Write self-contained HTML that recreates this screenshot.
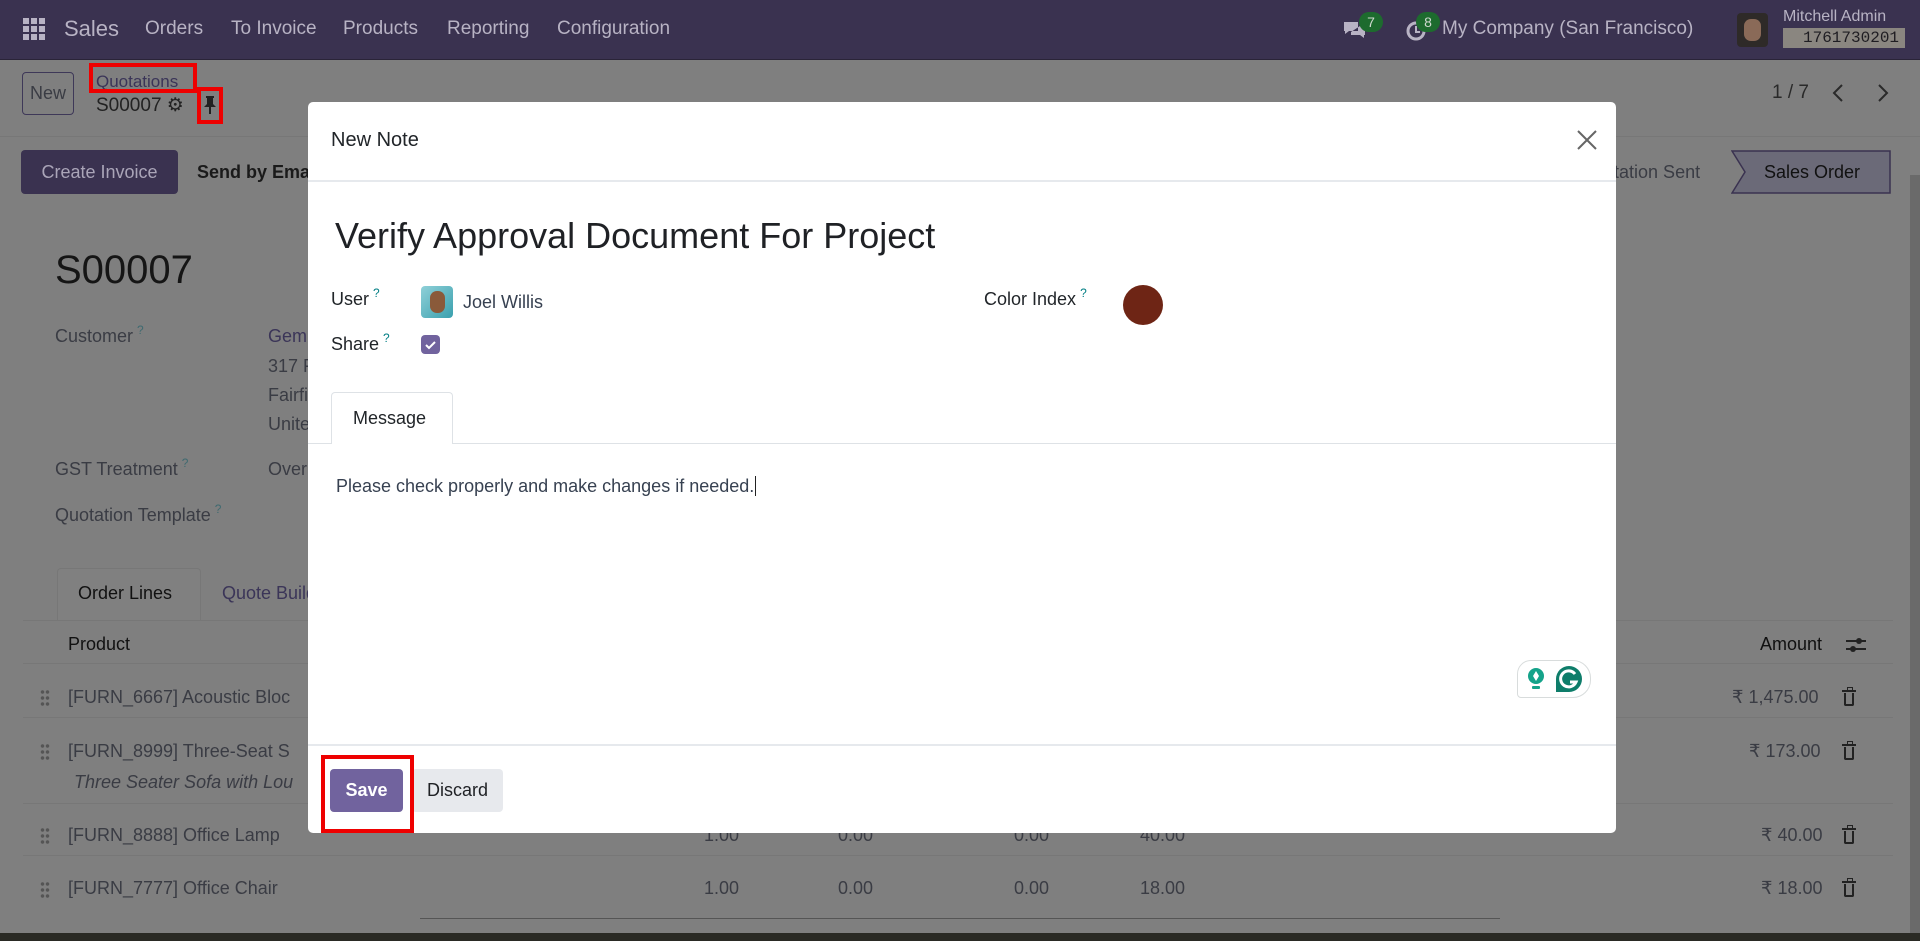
<!DOCTYPE html>
<html><head><meta charset="utf-8"><style>
*{box-sizing:border-box;margin:0;padding:0}
body{width:1920px;height:941px;overflow:hidden;font-family:"Liberation Sans",sans-serif;background:#7f7f7f;position:relative;color:#111}
.a{position:absolute;white-space:nowrap}
.nav{position:absolute;left:0;top:0;width:1920px;height:60px;background:#3a3250;border-bottom:1px solid #2a2438}
.nav .a{color:#b8b3c4;font-size:19px;top:18px}
.g{color:#3a3c44}
.hr{position:absolute;height:1px;background:#777}
.modal{position:absolute;left:308px;top:102px;width:1308px;height:731px;background:#fff;border-radius:5px}
.modal .a{color:#212529}
.q{color:#017e84;font-size:12px;position:relative;top:-8px;margin-left:4px}
.trash{position:absolute;width:10px;height:13px;border:2px solid #222;border-top:none;border-radius:0 0 2px 2px}
.trash:before{content:"";position:absolute;left:-4px;top:-3px;width:14px;height:2px;background:#222}
.trash:after{content:"";position:absolute;left:1px;top:-6px;width:4px;height:2px;border:1px solid #222;border-bottom:none}
.drag{position:absolute;width:10px;height:18px;background:radial-gradient(circle,#555 1.5px,transparent 2px) 0 0/5px 6px}
.ff{font-size:18px}
</style></head><body>
<div class="nav">
  <svg class="a" style="left:23px;top:18px" width="22" height="22"><g fill="#b8b3c4"><rect x="0" y="0" width="6" height="6"/><rect x="8" y="0" width="6" height="6"/><rect x="16" y="0" width="6" height="6"/><rect x="0" y="8" width="6" height="6"/><rect x="8" y="8" width="6" height="6"/><rect x="16" y="8" width="6" height="6"/><rect x="0" y="16" width="6" height="6"/><rect x="8" y="16" width="6" height="6"/><rect x="16" y="16" width="6" height="6"/></g></svg>
  <div class="a" style="left:64px;font-size:22px;top:16px">Sales</div>
  <div class="a" style="left:145px">Orders</div>
  <div class="a" style="left:231px">To Invoice</div>
  <div class="a" style="left:343px">Products</div>
  <div class="a" style="left:447px">Reporting</div>
  <div class="a" style="left:557px">Configuration</div>
  <svg class="a" style="left:1342px;top:18px" width="26" height="26"><path d="M2 4h14v9H7l-4 3v-3H2z M9 14v3h9l4 3v-3h1V8h-5" fill="#b8b3c4"/></svg>
  <div class="a" style="left:1359px;top:12px;width:24px;height:20px;border-radius:10px;background:#1d6b2e;color:#cfd8cf;font-size:14px;text-align:center;line-height:20px">7</div>
  <svg class="a" style="left:1405px;top:20px" width="22" height="22"><circle cx="11" cy="11" r="8" fill="none" stroke="#b8b3c4" stroke-width="3"/><path d="M11 6v6h4" stroke="#b8b3c4" stroke-width="2" fill="none"/></svg>
  <div class="a" style="left:1416px;top:12px;width:24px;height:20px;border-radius:10px;background:#1d6b2e;color:#cfd8cf;font-size:14px;text-align:center;line-height:20px">8</div>
  <div class="a" style="left:1442px">My Company (San Francisco)</div>
  <div class="a" style="left:1737px;top:13px;width:31px;height:34px;border-radius:4px;background:#2e2a28"><div style="position:absolute;left:7px;top:6px;width:17px;height:22px;border-radius:7px;background:#8a6a58"></div></div>
  <div class="a" style="left:1783px;top:8px;font-size:16px">Mitchell Admin</div>
  <div class="a" style="left:1783px;top:28px;width:122px;height:20px;background:#8a8680;color:#1f1d22;font-family:'Liberation Mono',monospace;font-size:16px;line-height:20px;padding-left:20px">1761730201</div>
</div>
<div class="a" style="left:22px;top:72px;width:52px;height:43px;border:1px solid #3e3858;border-radius:4px;color:#3a3c44;font-size:18px;text-align:center;line-height:41px">New</div>
<div class="a" style="left:96px;top:72px;font-size:17px;color:#3b3558">Quotations</div>
<div class="a" style="left:89px;top:63px;width:108px;height:30px;border:4px solid #e00"></div>
<div class="a" style="left:96px;top:94px;font-size:19px;color:#222">S00007 ⚙</div>
<div class="a" style="left:197px;top:87px;width:26px;height:37px;border:4px solid #e00"></div>
<svg class="a" style="left:203px;top:95px" width="14" height="20"><path d="M3 1h8v2h-1v6l3 3H1l3-3V3H3z M6 12h2v7H6z" fill="#222"/></svg>
<div class="a" style="left:1772px;top:82px;font-size:19px;color:#2a2a2a">1 / 7</div>
<svg class="a" style="left:1831px;top:83px" width="14" height="20"><path d="M11 2L3 10l8 8" stroke="#2a2a2a" stroke-width="2" fill="none"/></svg>
<svg class="a" style="left:1876px;top:83px" width="14" height="20"><path d="M3 2l8 8-8 8" stroke="#2a2a2a" stroke-width="2" fill="none"/></svg>
<div class="hr" style="left:0;top:136px;width:1920px"></div>
<div class="a" style="left:21px;top:150px;width:157px;height:44px;background:#3a3250;border-radius:4px;color:#aaa5b8;font-size:18px;text-align:center;line-height:44px">Create Invoice</div>
<div class="a" style="left:197px;top:162px;font-size:18px;color:#1a1a1a;font-weight:bold">Send by Email</div>
<div class="a" style="left:1580px;top:162px;font-size:18px;color:#3a3c44">Quotation Sent</div>
<svg class="a" style="left:1731px;top:150px" width="160" height="44"><path d="M1 1H159V43H1L14 22Z" fill="#6b6a78" stroke="#3a3250" stroke-width="1.5"/></svg>
<div class="a" style="left:1764px;top:162px;font-size:18px;color:#111">Sales Order</div>
<div class="a" style="left:1910px;top:175px;width:10px;height:766px;background:#6a6a6a"></div>
<div class="a" style="left:55px;top:248px;font-size:40px;color:#151515">S00007</div>
<div class="a g ff" style="left:55px;top:326px">Customer<span class="q" style="color:#3f6a70">?</span></div>
<div class="a ff" style="left:268px;top:326px;color:#3b3558">Gemini</div>
<div class="a g ff" style="left:268px;top:356px">317 F</div>
<div class="a g ff" style="left:268px;top:385px">Fairfi</div>
<div class="a g ff" style="left:268px;top:414px">Unite</div>
<div class="a g ff" style="left:55px;top:459px">GST Treatment<span class="q" style="color:#3f6a70">?</span></div>
<div class="a g ff" style="left:268px;top:459px">Over</div>
<div class="a g ff" style="left:55px;top:505px">Quotation Template<span class="q" style="color:#3f6a70">?</span></div>
<div class="a" style="left:57px;top:568px;width:144px;height:53px;border:1px solid #777;border-bottom:none;border-radius:4px 4px 0 0;background:#808080"></div>
<div class="a ff" style="left:78px;top:583px;color:#111">Order Lines</div>
<div class="a ff" style="left:222px;top:583px;color:#3b3558">Quote Builder</div>
<div class="hr" style="left:23px;top:620px;width:1870px"></div>
<div class="a ff" style="left:68px;top:634px;color:#111">Product</div>
<div class="a ff" style="left:1760px;top:634px;color:#111">Amount</div>
<svg class="a" style="left:1846px;top:636px" width="20" height="18"><path d="M0 5h20M0 13h20" stroke="#222" stroke-width="2"/><circle cx="13" cy="5" r="3" fill="#222"/><circle cx="7" cy="13" r="3" fill="#222"/></svg>
<div class="hr" style="left:23px;top:663px;width:1870px"></div>
<div class="drag" style="left:40px;top:689px"></div>
<div class="a g ff" style="left:68px;top:687px">[FURN_6667] Acoustic Bloc</div>
<div class="a g ff" style="left:1732px;top:687px">₹ 1,475.00</div><div class="trash" style="left:1844px;top:693px"></div>
<div class="hr" style="left:23px;top:717px;width:1870px"></div>
<div class="drag" style="left:40px;top:743px"></div>
<div class="a g ff" style="left:68px;top:741px">[FURN_8999] Three-Seat S</div>
<div class="a g ff" style="left:74px;top:772px;font-style:italic">Three Seater Sofa with Lou</div>
<div class="a g ff" style="left:1749px;top:741px">₹ 173.00</div><div class="trash" style="left:1844px;top:747px"></div>
<div class="hr" style="left:23px;top:803px;width:1870px"></div>
<div class="drag" style="left:40px;top:827px"></div>
<div class="a g ff" style="left:68px;top:825px">[FURN_8888] Office Lamp</div>
<div class="a g ff" style="left:704px;top:825px">1.00</div>
<div class="a g ff" style="left:838px;top:825px">0.00</div>
<div class="a g ff" style="left:1014px;top:825px">0.00</div>
<div class="a g ff" style="left:1140px;top:825px">40.00</div>
<div class="a g ff" style="left:1761px;top:825px">₹ 40.00</div><div class="trash" style="left:1844px;top:831px"></div>
<div class="hr" style="left:23px;top:855px;width:1870px"></div>
<div class="drag" style="left:40px;top:881px"></div>
<div class="a g ff" style="left:68px;top:878px">[FURN_7777] Office Chair</div>
<div class="a g ff" style="left:704px;top:878px">1.00</div>
<div class="a g ff" style="left:838px;top:878px">0.00</div>
<div class="a g ff" style="left:1014px;top:878px">0.00</div>
<div class="a g ff" style="left:1140px;top:878px">18.00</div>
<div class="a g ff" style="left:1761px;top:878px">₹ 18.00</div><div class="trash" style="left:1844px;top:884px"></div>
<div class="hr" style="left:420px;top:918px;width:1080px;background:#555"></div>
<div class="a" style="left:0;top:933px;width:1920px;height:8px;background:#2a2a24"></div>
<div class="modal">
  <div class="a" style="left:23px;top:27px;font-size:20px">New Note</div>
  <svg class="a" style="left:1269px;top:28px" width="20" height="20"><path d="M1 1L19 19M19 1L1 19" stroke="#666" stroke-width="2"/></svg>
  <div class="a" style="left:0;top:78px;width:1308px;height:2px;background:#e6e9ed"></div>
  <div class="a" style="left:27px;top:113px;font-size:36px;color:#1f2125">Verify Approval Document For Project</div>
  <div class="a" style="left:23px;top:187px;font-size:18px">User<span class="q">?</span></div>
  <div class="a" style="left:113px;top:184px;width:32px;height:32px;border-radius:4px;background:linear-gradient(135deg,#8fd0d8,#3aa0ae)"><div style="position:absolute;left:9px;top:5px;width:15px;height:22px;border-radius:7px;background:#8a5a3a"></div></div>
  <div class="a" style="left:155px;top:190px;font-size:18px;color:#374151">Joel Willis</div>
  <div class="a" style="left:676px;top:187px;font-size:18px">Color Index<span class="q">?</span></div>
  <div class="a" style="left:815px;top:183px;width:40px;height:40px;border-radius:50%;background:#6e2515"></div>
  <div class="a" style="left:23px;top:232px;font-size:18px">Share<span class="q">?</span></div>
  <div class="a" style="left:113px;top:233px;width:19px;height:19px;border-radius:4px;background:#71639e"><svg width="19" height="19"><path d="M5 10l3 3 6-6" stroke="#fff" stroke-width="2" fill="none"/></svg></div>
  <div class="a" style="left:23px;top:290px;width:122px;height:52px;border:1px solid #dee2e6;border-bottom:none;border-radius:4px 4px 0 0;background:#fff"></div>
  <div class="a" style="left:45px;top:306px;font-size:18px">Message</div>
  <div class="a" style="left:0;top:341px;width:1308px;height:1px;background:#dee2e6"></div>
  <div class="a" style="top:341px;left:24px;width:120px;height:2px;background:#fff"></div>
  <div class="a" style="left:28px;top:374px;font-size:18px;color:#374151">Please check properly and make changes if needed.<span style="border-left:1px solid #222;margin-left:1px"></span></div>
  <div class="a" style="left:1209px;top:558px;width:74px;height:38px;border:1px solid #d8dcdc;border-radius:14px 18px 18px 4px;background:#fff">
    <svg style="position:absolute;left:8px;top:6px" width="22" height="26"><circle cx="10" cy="9" r="8" fill="#15a38a"/><path d="M10 4l3 5-3 5-3-5z" fill="#fff"/><rect x="6" y="19" width="8" height="3" rx="1" fill="#15a38a"/></svg>
    <svg style="position:absolute;left:37px;top:4px" width="28" height="30"><path d="M14 1a13 13 0 1 1 0 26H1V14A13 13 0 0 1 14 1z" fill="#0e7d6a"/><path d="M20 9a8 8 0 1 0 1 8h-6" stroke="#fff" stroke-width="3" fill="none"/></svg>
  </div>
  <div class="a" style="left:0;top:642px;width:1308px;height:2px;background:#e6e9ed"></div>
  <div class="a" style="left:22px;top:667px;width:73px;height:43px;border-radius:4px;background:#71639e;color:#fff;font-size:18px;text-align:center;line-height:43px;font-weight:bold">Save</div>
  <div class="a" style="left:104px;top:667px;width:91px;height:43px;border-radius:4px;background:#e7e9ed;font-size:18px;text-align:center;line-height:43px;color:#1f2125">Discard</div>
  <div class="a" style="left:13px;top:653px;width:93px;height:78px;border:4px solid #e00"></div>
</div>
</body></html>
